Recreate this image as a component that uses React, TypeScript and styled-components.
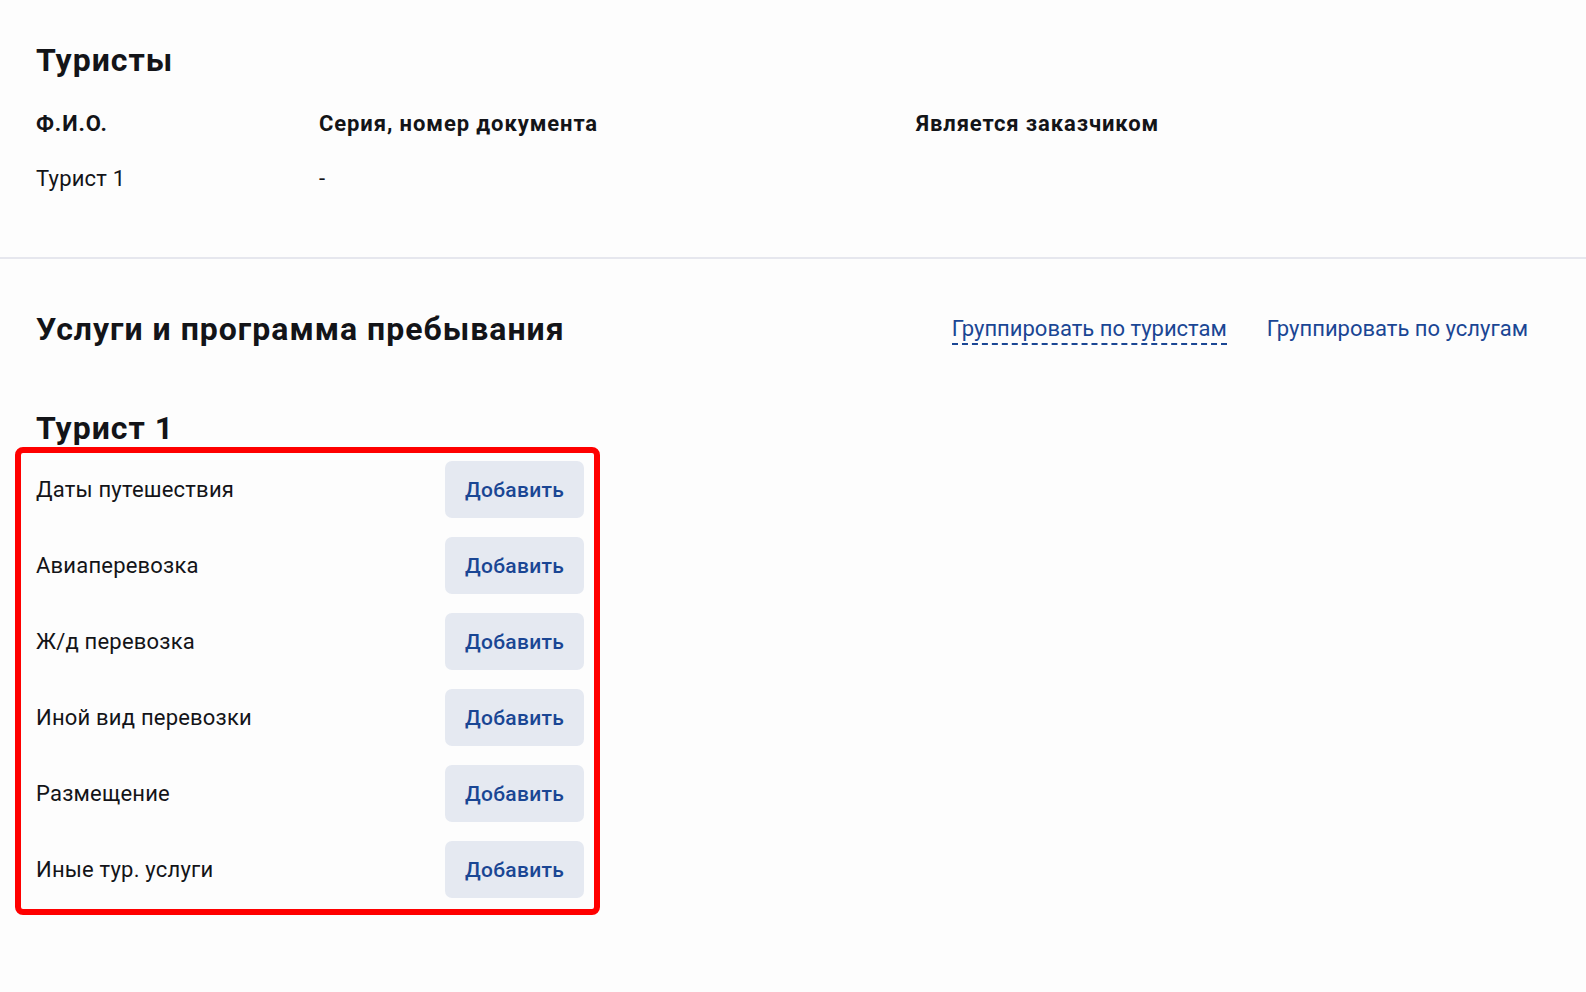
import styled, { createGlobalStyle } from "styled-components";

const GlobalStyle = createGlobalStyle`
  body {
    margin: 0;
    background: #fdfdfd;
    font-family: 'Roboto', 'Liberation Sans', sans-serif;
    color: #131418;
  }
`

const services = [
  'Даты путешествия',
  'Авиаперевозка',
  'Ж/д перевозка',
  'Иной вид перевозки',
  'Размещение',
  'Иные тур. услуги',
]

const App = () => {
  return (
    <>
      <GlobalStyle />
      <Page>
        <TopSection>
          <SectionTitle>Туристы</SectionTitle>
          <Table>
            <HeadCell>Ф.И.О.</HeadCell>
            <HeadCell>Серия, номер документа</HeadCell>
            <HeadCell>Является заказчиком</HeadCell>
            <Cell>Турист 1</Cell>
            <Cell>-</Cell>
            <Cell></Cell>
          </Table>
        </TopSection>
        <Divider />
        <ServicesSection>
          <ServicesHeader>
            <SectionTitle>Услуги и программа пребывания</SectionTitle>
            <Links>
              <GroupLink $active>Группировать по туристам</GroupLink>
              <GroupLink>Группировать по услугам</GroupLink>
            </Links>
          </ServicesHeader>
          <TouristName>Турист 1</TouristName>
          <Highlight>
            {services.map((s) => (
              <ServiceRow key={s}>
                <ServiceName>{s}</ServiceName>
                <AddButton>Добавить</AddButton>
              </ServiceRow>
            ))}
          </Highlight>
        </ServicesSection>
      </Page>
    </>
  )
}

const Page = styled.div`
  min-height: 992px;
`

const TopSection = styled.section`
  padding: 41px 36px 0;
  height: 216px;
  box-sizing: border-box;
`

const SectionTitle = styled.h2`
  margin: 0;
  font-size: 32px;
  line-height: 38px;
  font-weight: 700;
  letter-spacing: 1px;
`

const Table = styled.div`
  display: grid;
  grid-template-columns: 283px 597px 1fr;
  grid-template-rows: 55px 55px;
  margin-top: 17px;
  align-items: center;
`

const HeadCell = styled.div`
  font-size: 22px;
  font-weight: 700;
  letter-spacing: 0.9px;
`

const Cell = styled.div`
  font-size: 22px;
  font-weight: 400;
  letter-spacing: 0.2px;
`

const Divider = styled.hr`
  margin: 0;
  border: none;
  height: 2px;
  background: #e6e7ee;
  margin-top: 41px;
`

const ServicesSection = styled.section`
  padding: 51px 36px 0;
`

const ServicesHeader = styled.div`
  display: flex;
  align-items: center;
  justify-content: space-between;
  padding-right: 22px;
`

const Links = styled.div`
  display: flex;
  gap: 40px;
  margin-top: 2px;
`

const GroupLink = styled.a<{ $active?: boolean }>`
  font-size: 22px;
  color: #1a4694;
  cursor: pointer;
  padding-bottom: 2px;
  border-bottom: 2px dashed ${(p) => (p.$active ? '#1a4694' : 'transparent')};
`

const TouristName = styled.h3`
  margin: 61px 0 0;
  font-size: 32px;
  line-height: 38px;
  font-weight: 700;
  letter-spacing: 1px;
`

const Highlight = styled.div`
  width: 585px;
  box-sizing: border-box;
  margin-left: -21px;
  border: 6px solid #ff0000;
  border-radius: 8px;
  padding: 8px 10px 11px 15px;
  display: flex;
  flex-direction: column;
  gap: 19px;
`

const ServiceRow = styled.div`
  display: flex;
  align-items: center;
  justify-content: space-between;
`

const ServiceName = styled.span`
  font-size: 22px;
  letter-spacing: 0.2px;
`

const AddButton = styled.button`
  width: 139px;
  height: 57px;
  border: none;
  border-radius: 7px;
  background: #e5e9f1;
  color: #1a4694;
  font-family: inherit;
  font-size: 21px;
  font-weight: 500;
  letter-spacing: 0.3px;
  cursor: pointer;
`

export default App
